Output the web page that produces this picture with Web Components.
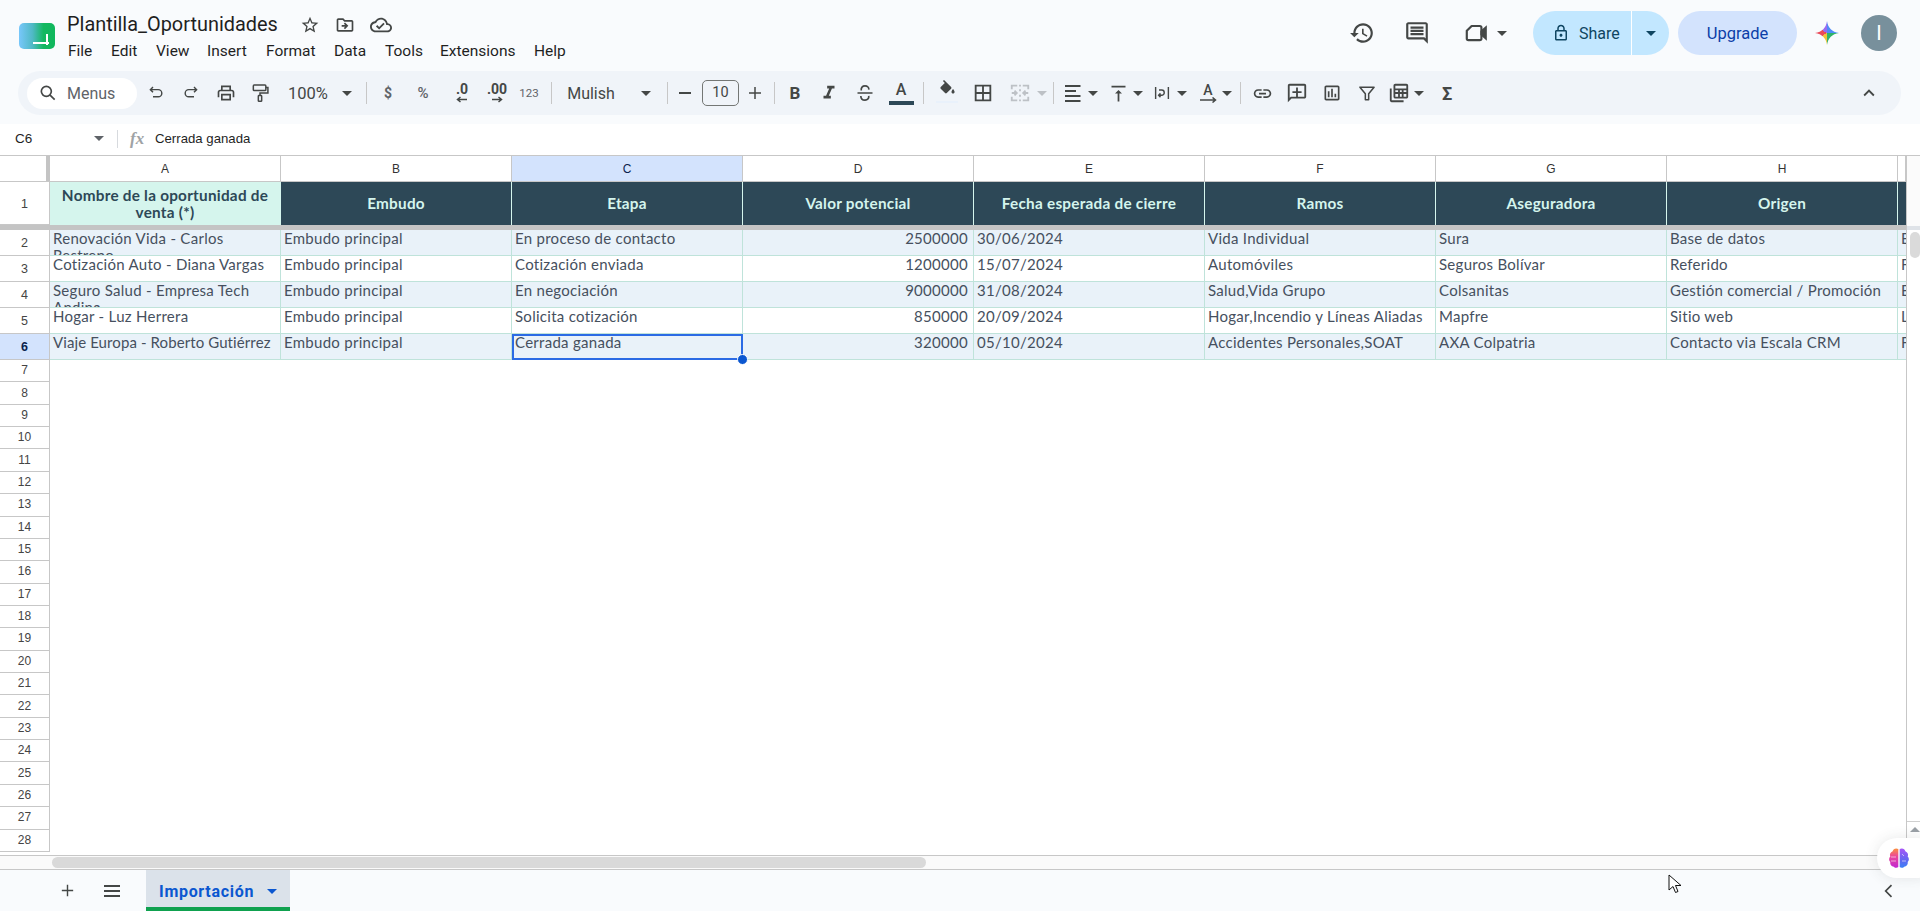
<!DOCTYPE html>
<html lang="es"><head><meta charset="utf-8"><title>Plantilla_Oportunidades</title>
<style>
html,body{margin:0;height:100%;overflow:hidden;background:#f9fbfd}
body{display:flex;flex-direction:column;height:911px;width:1920px;font-family:Roboto,"Liberation Sans",sans-serif;position:relative}
</style></head><body>
<gs-header></gs-header>
<gs-toolbar></gs-toolbar>
<gs-formula></gs-formula>
<gs-grid></gs-grid>
<gs-tabs></gs-tabs>
<gs-overlay></gs-overlay>
<script>
const P={
star:'M22 9.24l-7.19-.62L12 2 9.19 8.63 2 9.24l5.46 4.73L5.82 21 12 17.27 18.18 21l-1.63-7.03L22 9.24zM12 15.4l-3.76 2.27 1-4.28-3.32-2.88 4.38-.38L12 6.1l1.71 4.04 4.38.38-3.32 2.88 1 4.28L12 15.4z',
folder:'M20 6h-8l-2-2H4c-1.1 0-2 .9-2 2v12c0 1.1.9 2 2 2h16c1.1 0 2-.9 2-2V8c0-1.1-.9-2-2-2zm0 12H4V6h5.17l2 2H20v10zm-8.01-9l-1.41 1.41L12.16 12H8v2h4.16l-1.59 1.59L11.99 17 16 13.01 11.99 9z',
cloud:'M19.35 10.04C18.67 6.59 15.64 4 12 4 9.11 4 6.6 5.64 5.35 8.04 2.34 8.36 0 10.91 0 14c0 3.31 2.69 6 6 6h13c2.76 0 5-2.24 5-5 0-2.64-2.05-4.78-4.65-4.96zM19 18H6c-2.21 0-4-1.79-4-4 0-2.05 1.53-3.76 3.56-3.97l1.07-.11.5-.95C8.08 7.14 9.94 6 12 6c2.62 0 4.88 1.86 5.39 4.43l.3 1.5 1.53.11c1.56.1 2.78 1.41 2.78 2.96 0 1.65-1.35 3-3 3zm-9-3.82l-2.09-2.09L6.5 13.5 10 17l6.01-6.01-1.41-1.41z',
history:'M13 3c-4.97 0-9 4.03-9 9H1l3.89 3.89.07.14L9 12H6c0-3.87 3.13-7 7-7s7 3.13 7 7-3.13 7-7 7c-1.93 0-3.68-.79-4.94-2.06l-1.42 1.42C8.27 19.99 10.51 21 13 21c4.97 0 9-4.03 9-9s-4.03-9-9-9zm-1 5v5l4.28 2.54.72-1.21-3.5-2.08V8H12z',
comments:'M21.99 4c0-1.1-.89-2-1.99-2H4c-1.1 0-2 .9-2 2v12c0 1.1.9 2 2 2h14l4 4-.01-18zM20 4v13.17L18.83 16H4V4h16zM6 12h12v2H6zm0-3h12v2H6zm0-3h12v2H6z',
lock:'M18 8h-1V6c0-2.76-2.24-5-5-5S7 3.24 7 6v2H6c-1.1 0-2 .9-2 2v10c0 1.1.9 2 2 2h12c1.1 0 2-.9 2-2V10c0-1.1-.9-2-2-2zM9 6c0-1.66 1.34-3 3-3s3 1.34 3 3v2H9V6zm9 14H6V10h12v10zm-6-3c1.1 0 2-.9 2-2s-.9-2-2-2-2 .9-2 2 .9 2 2 2z',
print:'M19 8h-1V3H6v5H5c-1.66 0-3 1.34-3 3v6h4v4h12v-4h4v-6c0-1.66-1.34-3-3-3zM8 5h8v3H8V5zm8 14H8v-4h8v4zm2-2v-4H6v4H4v-6c0-.55.45-1 1-1h14c.55 0 1 .45 1 1v6h-2z',
borders:'M3 3v18h18V3H3zm8 16H5v-6h6v6zm0-8H5V5h6v6zm8 8h-6v-6h6v6zm0-8h-6V5h6v6z',
valign:'M8 12h3v9h2v-9h3l-4-4-4 4zM4 3v2h16V3H4z',
link:'M3.9 12c0-1.71 1.39-3.1 3.1-3.1h4V7H7c-2.76 0-5 2.24-5 5s2.24 5 5 5h4v-1.9H7c-1.71 0-3.1-1.39-3.1-3.1zM8 13h8v-2H8v2zm9-6h-4v1.9h4c1.71 0 3.1 1.39 3.1 3.1s-1.39 3.1-3.1 3.1h-4V17h4c2.76 0 5-2.24 5-5s-2.24-5-5-5z',
addc:'M2 4c0-1.1.9-2 2-2h16c1.1 0 2 .9 2 2v12c0 1.1-.9 2-2 2H6l-4 4V4zm2 0v13.17L5.17 16H20V4H4zM11 6h2v4h4v2h-4v4h-2v-4H7v-2h4z',
chart:'M19 3H5c-1.1 0-2 .9-2 2v14c0 1.1.9 2 2 2h14c1.1 0 2-.9 2-2V5c0-1.1-.9-2-2-2zm0 16H5V5h14v14zM7 10h2v7H7zm4-3h2v10h-2zm4 6h2v4h-2z',
fill:'M16.56 8.94L7.62 0 6.21 1.41l2.38 2.38-5.15 5.15c-.59.59-.59 1.54 0 2.12l5.5 5.5c.29.29.68.44 1.06.44s.77-.15 1.06-.44l5.5-5.5c.59-.58.59-1.53 0-2.12zM19 11.5s-2 2.17-2 3.5c0 1.1.9 2 2 2s2-.9 2-2c0-1.33-2-3.5-2-3.5z',
calc:'M4 7H2v13c0 1.1.9 2 2 2h13v-2H4V7zm16-5H8c-1.1 0-2 .9-2 2v12c0 1.1.9 2 2 2h12c1.1 0 2-.9 2-2V4c0-1.1-.9-2-2-2zm0 2v3H8V4h12zM8 9h3v2H8V9zm0 4h3v3H8v-3zm5 3v-3h2v3h-2zm4 0v-3h3v3h-3zm3-5h-3V9h3v2zm-5 0h-2V9h2v2z',
ital:'M10 4v3h2.21l-3.42 8H6v3h8v-3h-2.21l3.42-8H18V4z',
up:'M7.41 15.41L12 10.83l4.59 4.58L18 14l-6-6-6 6z'
};
const ic=(n,s=24,c='#444746',st='')=>`<svg width="${s}" height="${s}" viewBox="0 0 24 24" fill="${c}" style="display:block;flex:none;${st}"><path d="${P[n]}"/></svg>`;
const S=(inner,s=24,c='#444746',w=2)=>`<svg width="${s}" height="${s}" viewBox="0 0 24 24" fill="none" stroke="${c}" stroke-width="${w}" style="display:block;flex:none">${inner}</svg>`;
const drop=(c='#444746',st='')=>`<svg width="10" height="5" viewBox="0 0 10 5" style="display:block;flex:none;${st}"><path d="M0 0h10L5 5z" fill="${c}"/></svg>`;
function shadow(el,html){el.attachShadow({mode:'open'}).innerHTML=html}

customElements.define('gs-header',class extends HTMLElement{connectedCallback(){
const menu=[['File',43],['Edit',45],['View',51],['Insert',59],['Format',68],['Data',51],['Tools',55],['Extensions',94],['Help',40]];
shadow(this,`<style>
:host{display:flex;height:71px;flex:none;align-items:flex-start;color:#1f1f1f}
.logo{margin:23px 0 0 19px;width:36px;height:26px;border-radius:5px;background:linear-gradient(90deg,#78c7fb 0%,#4fb9c4 38%,#14b860 68%,#10b75c 100%);position:relative;flex:none}
.logo i{position:absolute;background:#fff}
.logo .h{left:14px;top:19px;width:16px;height:2px}.logo .v{left:27px;top:11px;width:2px;height:11px}
.doc{margin-left:12px;width:900px}
.title{display:flex;align-items:center;height:24px;margin-top:13px}
.title b{font:400 19.900px/24px Roboto,sans-serif;width:233px}
.title span{width:35px;display:flex}
nav{display:flex;margin-top:4px;margin-left:1px;font:15.500px/20px Roboto,sans-serif}
.r{margin-left:auto;display:flex;align-items:center;height:44px;margin-top:11px;margin-right:23px}
.share{display:flex;height:44px;width:136px;border-radius:22px;background:#c2e7ff;overflow:hidden;margin-left:26px}
.share .a{width:99px;display:flex;align-items:center;padding-left:19px;box-sizing:border-box;gap:9px;border-right:1px solid #fff;font:400 16px Roboto,sans-serif;color:#0f4561}
.share .b{flex:1;display:flex;align-items:center;justify-content:center}
.up{width:119px;height:44px;border-radius:22px;background:#d3e3fd;margin-left:9px;display:flex;align-items:center;justify-content:center;font:400 16.500px Roboto,sans-serif;color:#0b3ea8}
.gem{width:24px;height:24px;margin-left:18px;background:conic-gradient(from 0deg,#4f8cf7 0 90deg,#2fb36a 90deg 180deg,#f0c33c 180deg 240deg,#ea4a5a 240deg 300deg,#9b6bf0 300deg 360deg);clip-path:path('M12 0C13 7 17 11 24 12C17 13 13 17 12 24C11 17 7 13 0 12C7 11 11 7 12 0Z')}
.av{width:36px;height:36px;border-radius:50%;background:#78909c;color:#fff;font:400 20px/36px Roboto,sans-serif;text-align:center;margin-left:22px}
</style>
<div class="logo"><i class="h"></i><i class="v"></i></div>
<div class="doc"><div class="title"><b>Plantilla_Oportunidades</b><span>${ic('star',20)}</span><span>${ic('folder',20)}</span><span>${ic('cloud',22,'#444746','margin-top:-1px')}</span></div>
<nav>${menu.map(m=>`<span style="width:${m[1]}px">${m[0]}</span>`).join('')}</nav></div>
<div class="r">
<span style="margin-right:29px">${ic('history',26)}</span>
<span style="margin-right:33px">${ic('comments',26)}</span>
${S('<path d="M8 5.5h7.5a1.5 1.5 0 011.5 1.5v10a1.5 1.5 0 01-1.5 1.5H5A1.5 1.5 0 013.5 17V10z" stroke-linejoin="round"/><path d="M17 10.5l4-3.5v10l-4-3.5z" fill="#444746"/>',26)}
<span style="margin-left:8px">${drop()}</span>
<div class="share"><div class="a">${ic('lock',18,'#0f4561')}<span>Share</span></div><div class="b">${drop('#0f4561')}</div></div>
<div class="up">Upgrade</div>
<div class="gem"></div>
<div class="av">I</div>
</div>`)}});

customElements.define('gs-toolbar',class extends HTMLElement{connectedCallback(){
const t=(s,st='')=>`<span style="white-space:nowrap;${st}">${s}</span>`;
const arr=(d)=>`<svg width="12" height="7" viewBox="0 0 12 7" fill="none" stroke="#444746" stroke-width="1.5" style="display:block;margin-top:1px">${d?'<path d="M1 3.5h9M7.5 1l3 2.5-3 2.5"/>':'<path d="M11 3.5H2M4.500 1l-3 2.500 3 2.500"/>'}</svg>`;
const items=[
[156,18,S('<path d="M8 4L4.500 7.500 8 11M4.500 7.500H15a4.700 4.700 0 010 9.500H8"/>',18,'#444746',1.9)],
[191,18,S('<path d="M16 4l3.500 3.500L16 11M19.500 7.500H9a4.700 4.700 0 000 9.500h7"/>',18,'#444746',1.9)],
[226,20,ic('print',20)],
[260,18,S('<rect x="4" y="2.500" width="15" height="6.500" rx="1"/><path d="M19 5.500h2.500V12H12v3"/><rect x="10" y="15" width="4" height="7" rx=".8"/>',20,'#444746',1.8)],
[308,42,t('100%','font:16.500px Roboto,sans-serif;color:#444746')],
[347,10,drop()],
[366,1,'<i class="sep"></i>'],
[388,10,t('$','font:700 14px Roboto,sans-serif;color:#5f6368')],
[423,14,t('%','font:500 15px Roboto,sans-serif;color:#5f6368')],
[462,20,`<span class="st">${t('.0','font:700 14px/11px Roboto,sans-serif;color:#444746')}${arr(0)}</span>`],
[497,24,`<span class="st">${t('.00','font:700 14px/11px Roboto,sans-serif;color:#444746')}${arr(1)}</span>`],
[529,22,t('123','font:11.5px Roboto,sans-serif;color:#5f6368')],
[551,1,'<i class="sep"></i>'],
[591,48,t('Mulish','font:16px Roboto,sans-serif;color:#444746')],
[646,10,drop()],
[667,1,'<i class="sep"></i>'],
[685,12,'<i style="display:block;width:12px;height:2px;background:#444746"></i>'],
[720.5,37,'<span class="box">10</span>'],
[755,14,S('<path d="M12 4v16M4 12h16"/>',18)],
[774,1,'<i class="sep"></i>'],
[795,12,t('B','font:700 17px Roboto,sans-serif;color:#444746')],
[829,20,ic('ital',22)],
[865,18,S('<path d="M7.500 9C7 5.500 9 3.500 12 3.500S17 5.500 16.500 8M7 15.500C7 18.500 9 20.500 12 20.500s5-2 4.500-5M3 12h18"/>',20,'#444746',2)],
[901,25,`<span class="tc">${t('A','font:500 16px/18px Roboto,sans-serif;color:#444746')}<i></i></span>`],
[923,1,'<i class="sep"></i>'],
[947,22,`<span class="fc">${ic('fill',19,'#444746')}<i></i></span>`],
[983,20,ic('borders',22)],
[1020,20,S('<path d="M3 8V4h6M15 4h6v4M3 16v4h6M15 20h6v-4M3 12h5M6 9.500L8.500 12 6 14.500M21 12h-5M18 9.500L15.500 12 18 14.500M12 3v2M12 8v2M12 14v2M12 19v2"/>',22,'#bdc1c6',2)],
[1042,10,drop('#bdc1c6')],
[1053,1,'<i class="sep"></i>'],
[1073,16,`<svg width="16" height="17" viewBox="0 0 16 17" fill="#444746" style="display:block"><path d="M0 0h15.500v2H0zM0 5h11v2H0zM0 10h15.500v2H0zM0 15h15.500v2H0z"/></svg>`],
[1093,10,drop()],
[1118,20,ic('valign',21)],
[1138,10,drop()],
[1162,16,S('<path d="M3.500 4v16M20.500 4v16M8 8h3.500a3.500 3.500 0 010 7H8M10 12.500L7.500 15l2.500 2.500"/>',18,'#444746',1.9)],
[1182,10,drop()],
[1208,18,`<span class="rot">${t('A','font:500 14px/14px Roboto,sans-serif;color:#444746')}<svg width="17" height="6" viewBox="0 0 17 6" fill="none" stroke="#444746" stroke-width="1.500"><path d="M0 3h15M12.500 .5L15.500 3l-3 2.500"/></svg></span>`],
[1227,10,drop()],
[1240,1,'<i class="sep"></i>'],
[1262,20,ic('link',21)],
[1297,20,ic('addc',22)],
[1332,20,ic('chart',20)],
[1367,18,S('<path d="M3.500 5h17l-6.500 8v7h-4v-7z" stroke-linejoin="round"/>',20,'#444746',1.8)],
[1399,20,ic('calc',22)],
[1419,10,drop()],
[1447,14,t('Σ','font:700 18px Roboto,sans-serif;color:#444746')],
];
let x=27+110; let h='';
for(const [c,w,m] of items){const l=c-w/2;h+=`<span class="i" style="width:${w}px;margin-left:${(l-x).toFixed(1)}px">${m}</span>`;x=l+w}
shadow(this,`<style>
:host{display:flex;align-items:center;height:44px;flex:none;margin:0 19px 9px 18px;background:#f0f4f9;border-radius:22px;box-sizing:border-box;padding-left:9px}
.menus{width:110px;height:31px;flex:none;background:#fff;border-radius:16px;display:flex;align-items:center;box-sizing:border-box;padding-left:11px;gap:9px;font:16px Roboto,sans-serif;color:#5f6368}
.i{display:flex;align-items:center;justify-content:center;flex:none;height:30px}
.sep{display:block;width:1px;height:22px;background:#c7c7c7;flex:none}
.st{display:flex;flex-direction:column;align-items:center}
.box{width:37px;height:26px;box-sizing:border-box;border:1px solid #747775;border-radius:5px;font:14.5px/24px Roboto,sans-serif;text-align:center;color:#444746;display:block}
.tc{display:flex;flex-direction:column;align-items:center;width:25px}.tc i{display:block;width:25px;height:4px;background:#2d4857;margin-top:2px}
.fc{display:flex;flex-direction:column;align-items:center;margin-top:-4px}.fc i{display:block;width:22px;height:2px;background:#e9f1fb;margin-top:2px}
.rot{display:flex;flex-direction:column;align-items:center}
.col{margin-left:auto;margin-right:21px;display:flex}
</style><div class="menus">${S('<circle cx="10" cy="10" r="6"/><path d="M14.500 14.500L20 20"/>',20)}<span>Menus</span></div>${h}<span class="col">${ic('up',22)}</span>`)}});

customElements.define('gs-formula',class extends HTMLElement{connectedCallback(){
shadow(this,`<style>
:host{display:flex;align-items:center;height:31px;flex:none;background:#fff;font:13.200px "Liberation Sans",Arial,sans-serif;color:#1f1f1f;box-sizing:border-box;padding-bottom:2px}
.n{width:94px;padding-left:15px;box-sizing:border-box;font-size:13.5px}
.s{width:1px;height:18px;background:#d7dade;margin:0 12px 0 13px}
.fx{font:italic 700 17px "Liberation Serif",serif;color:#a0a3a6;width:25px}
</style><span class="n">C6</span>${drop('#5f6368')}<i class="s"></i><span class="fx">fx</span><span>Cerrada ganada</span>`)}});

customElements.define('gs-grid',class extends HTMLElement{connectedCallback(){
const cols='ABCDEFGHI'.split('');
const head=['Nombre de la oportunidad de venta (*)','Embudo','Etapa','Valor potencial','Fecha esperada de cierre','Ramos','Aseguradora','Origen',''];
const rows=[
['Renovación Vida - Carlos Restrepo','Embudo principal','En proceso de contacto','2500000','30/06/2024','Vida Individual','Sura','Base de datos','Evelyn'],
['Cotización Auto - Diana Vargas','Embudo principal','Cotización enviada','1200000','15/07/2024','Automóviles','Seguros Bolívar','Referido','Felipe'],
['Seguro Salud - Empresa Tech Andina','Embudo principal','En negociación','9000000','31/08/2024','Salud,Vida Grupo','Colsanitas','Gestión comercial / Promoción','Evelyn'],
['Hogar - Luz Herrera','Embudo principal','Solicita cotización','850000','20/09/2024','Hogar,Incendio y Líneas Aliadas','Mapfre','Sitio web','Laura'],
['Viaje Europa - Roberto Gutiérrez','Embudo principal','Cerrada ganada','320000','05/10/2024','Accidentes Personales,SOAT','AXA Colpatria','Contacto via Escala CRM','Felipe'],
];
let g='<div class="rh corner"><i></i></div>';
cols.forEach((c,i)=>g+=`<div class="ch${c==='C'?' sel':''}">${i==8?'':c}</div>`);
g+='<div class="rh r1">1</div>';
head.forEach((h,i)=>g+=`<div class="hc${i==0?' first':''}">${h}</div>`);
g+='<div class="frz"></div>';
rows.forEach((r,ri)=>{g+=`<div class="rh dr${ri==4?' sel':''}">${ri+2}</div>`;
 r.forEach((v,ci)=>{g+=`<div class="c ${ri%2==0?'alt':''} ${ci==3?'num':''} ${ci==0&&ri==4?'one':''} ${ri==4&&ci==2?'cur':''}">${v}${ri==4&&ci==2?'<b class="h"></b>':''}</div>`});});
let more='';for(let i=7;i<=28;i++)more+=`<div class="rm">${i}</div>`;
shadow(this,`<style>
:host{display:flex;flex:1;min-height:0;flex-direction:column;background:#fff;border-top:1px solid #c7c7c7;box-sizing:border-box;border-bottom:1px solid #c7c7c7}
.main{display:flex;flex:1;min-height:0}
.area{width:1906px;overflow:hidden;flex:none;display:flex;flex-direction:column}
.g{display:grid;grid-template-columns:50px repeat(8,231px) 8px;grid-template-rows:26px 43px 5px 26px 26px 25.500px 26px 26.500px;font:15px "Lato","Liberation Sans",sans-serif;letter-spacing:.28px;color:#46505e}
.rh,.ch,.rm{font:12px "Liberation Sans",Arial,sans-serif;letter-spacing:0;color:#444;background:#fff;display:flex;align-items:center;justify-content:center;box-sizing:border-box}
.ch{border-right:1px solid #c7c7c7;border-bottom:1px solid #c7c7c7;color:#333}
.ch.sel{background:#d3e3fd;color:#0b1f4d}
.rh{border-right:1px solid #c7c7c7;border-bottom:1px solid #c7c7c7;padding-top:1px;font-size:12.500px}
.rh.sel{background:#d3e3fd;font-weight:700;color:#0b1f4d}
.corner{position:relative;border-bottom:1px solid #c7c7c7;border-right:0}.corner i{position:absolute;right:0;top:0;bottom:0;width:4px;background:#c4c4c4}
.hc{background:#2d4857;color:#d5f5ed;font-weight:700;font-size:15.300px;letter-spacing:.25px;line-height:17px;display:flex;align-items:center;justify-content:center;text-align:center;border-right:1px solid #d5f5ed;box-sizing:border-box;padding:0 4px;white-space:normal}
.hc.first{background:#d5f5ed;color:#2d4857}
.frz{grid-column:1/-1;background:#c4c4c4}
.c{background:#fff;border-right:1px solid #bfe3da;border-bottom:1px solid #bfe3da;box-sizing:border-box;padding:0 5px 0 3px;overflow:hidden;line-height:17px;white-space:normal;position:relative}
.c.alt{background:#e9f2f9}
.c.num{text-align:right}
.c.one{white-space:nowrap;letter-spacing:.1px}
.c.cur{overflow:visible;outline:2px solid #2b6be4;outline-offset:-2px;z-index:2}
.c.cur .h{position:absolute;width:11px;height:11px;right:-6px;bottom:-6px;border-radius:50%;background:#0b57d0;border:1px solid #fff;box-sizing:border-box}
.f{flex:1;min-height:0;overflow:hidden;width:50px}
.rm{height:22.360px;border-right:1px solid #c7c7c7;border-bottom:1px solid #c7c7c7;padding-bottom:1px}
.vs{flex:1;background:#fff;border-left:1px solid #c7c7c7;display:flex;flex-direction:column;box-sizing:border-box}
.vs .top{height:70px;background:#fbfbfb}
.vs .frz2{height:4px;background:#dfe3e8}
.vs .tr{flex:1;padding:2px 2px 0 2px;box-sizing:border-box}
.vs .th{width:10px;height:26px;background:#dadada;border-radius:5px;margin-left:1px}
.vs .ua{height:34px;border-top:1px solid #d0d0d0;display:flex;align-items:flex-start;justify-content:center;padding-top:5px;box-sizing:border-box}
.hs{height:13px;flex:none;display:flex;background:#fafafa;align-items:center;border-top:1px solid #c7c7c7}
.hs .l{width:52px;height:100%}
.hs .t{width:874px;height:11px;border-radius:6px;background:#d9d9d9}
.hs .e{margin-left:auto;width:1px;height:100%;background:#c7c7c7;margin-right:13px}
</style><div class="main"><div class="area"><div class="g">${g}</div><div class="f">${more}</div></div>
<div class="vs"><div class="top"></div><div class="frz2"></div><div class="tr"><div class="th"></div></div><div class="ua">${drop('#9aa0a6','transform:scaleY(-1)')}</div></div></div>
<div class="hs"><div class="l"></div><div class="t"></div><div class="e"></div></div>`)}});

customElements.define('gs-tabs',class extends HTMLElement{connectedCallback(){
shadow(this,`<style>
:host{display:flex;height:41px;flex:none;align-items:stretch;background:#f9fbfd}
.b{display:flex;align-items:center;justify-content:center;flex:none}
.tab{margin-left:19px;width:144px;box-sizing:border-box;background:#dbe2ea;border-bottom:4px solid #0fa14f;display:flex;align-items:center;padding-left:13px;color:#0b57d0;font:700 16px Roboto,sans-serif;letter-spacing:.7px;gap:13px;padding-top:6px}
.end{margin-left:auto;margin-right:21px}
</style><span class="b" style="margin-left:57px;width:20px">${S('<path d="M12 4v16M4 12h16"/>',17,'#444746',2)}</span>
<span class="b" style="margin-left:20px;width:30px">${S('<path d="M4 7h16M4 12h16M4 17h16"/>',24,'#444746',1.800)}</span>
<div class="tab"><span>Importación</span>${drop('#0b57d0')}</div>
<span class="b end">${S('<path d="M15 5l-7 7 7 7"/>',20,'#444746',2)}</span>`)}});

customElements.define('gs-overlay',class extends HTMLElement{connectedCallback(){
shadow(this,`<style>
:host{display:block;position:absolute;inset:0;pointer-events:none}
.bub{position:absolute;left:1877px;top:838px;width:60px;height:40px;border-radius:20px;background:#fff;box-shadow:0 0 14px rgba(60,64,67,.12);display:flex;align-items:center;padding-left:11px;box-sizing:border-box}
.cur{position:absolute;left:1668px;top:874px}
</style><div class="bub"><svg width="22" height="22" viewBox="0 0 22 22"><defs><linearGradient id="bl" x1="0" y1="0" x2="0" y2="1"><stop offset="0" stop-color="#fb923c"/><stop offset=".4" stop-color="#ec4899"/><stop offset="1" stop-color="#c026d3"/></linearGradient><linearGradient id="br" x1="0" y1="0" x2="0" y2="1"><stop offset="0" stop-color="#a855f7"/><stop offset=".6" stop-color="#6366f1"/><stop offset="1" stop-color="#3b82f6"/></linearGradient></defs>
<path d="M10.300 2C8 .6 5 1.800 4.700 4.200 2.300 5 1.300 7.500 2.300 9.500c-1.600 1.700-1.600 4 0 5.500-.5 2.500 1.300 4.600 3.500 4.700 1.500 1.700 3.500 1.300 4.500.3z" fill="url(#bl)"/><path d="M11.700 2c2.300-1.400 5.300-.2 5.600 2.200 2.400.8 3.400 3.300 2.400 5.300 1.600 1.700 1.600 4 0 5.500.5 2.500-1.300 4.600-3.500 4.700-1.500 1.700-3.500 1.300-4.500.3z" fill="url(#br)"/><path d="M3 10h5M14 7l2 2M3 14h5M14 14h4" stroke="#fff" stroke-width=".8" opacity=".7" fill="none"/></svg></div>
<svg class="cur" width="14" height="20" viewBox="0 0 14 20"><path d="M1 1v15l4-3.500 2.500 6 2.500-1-2.500-6H13z" fill="#fff" stroke="#111" stroke-width="1"/></svg>`)}});
</script></body></html>
